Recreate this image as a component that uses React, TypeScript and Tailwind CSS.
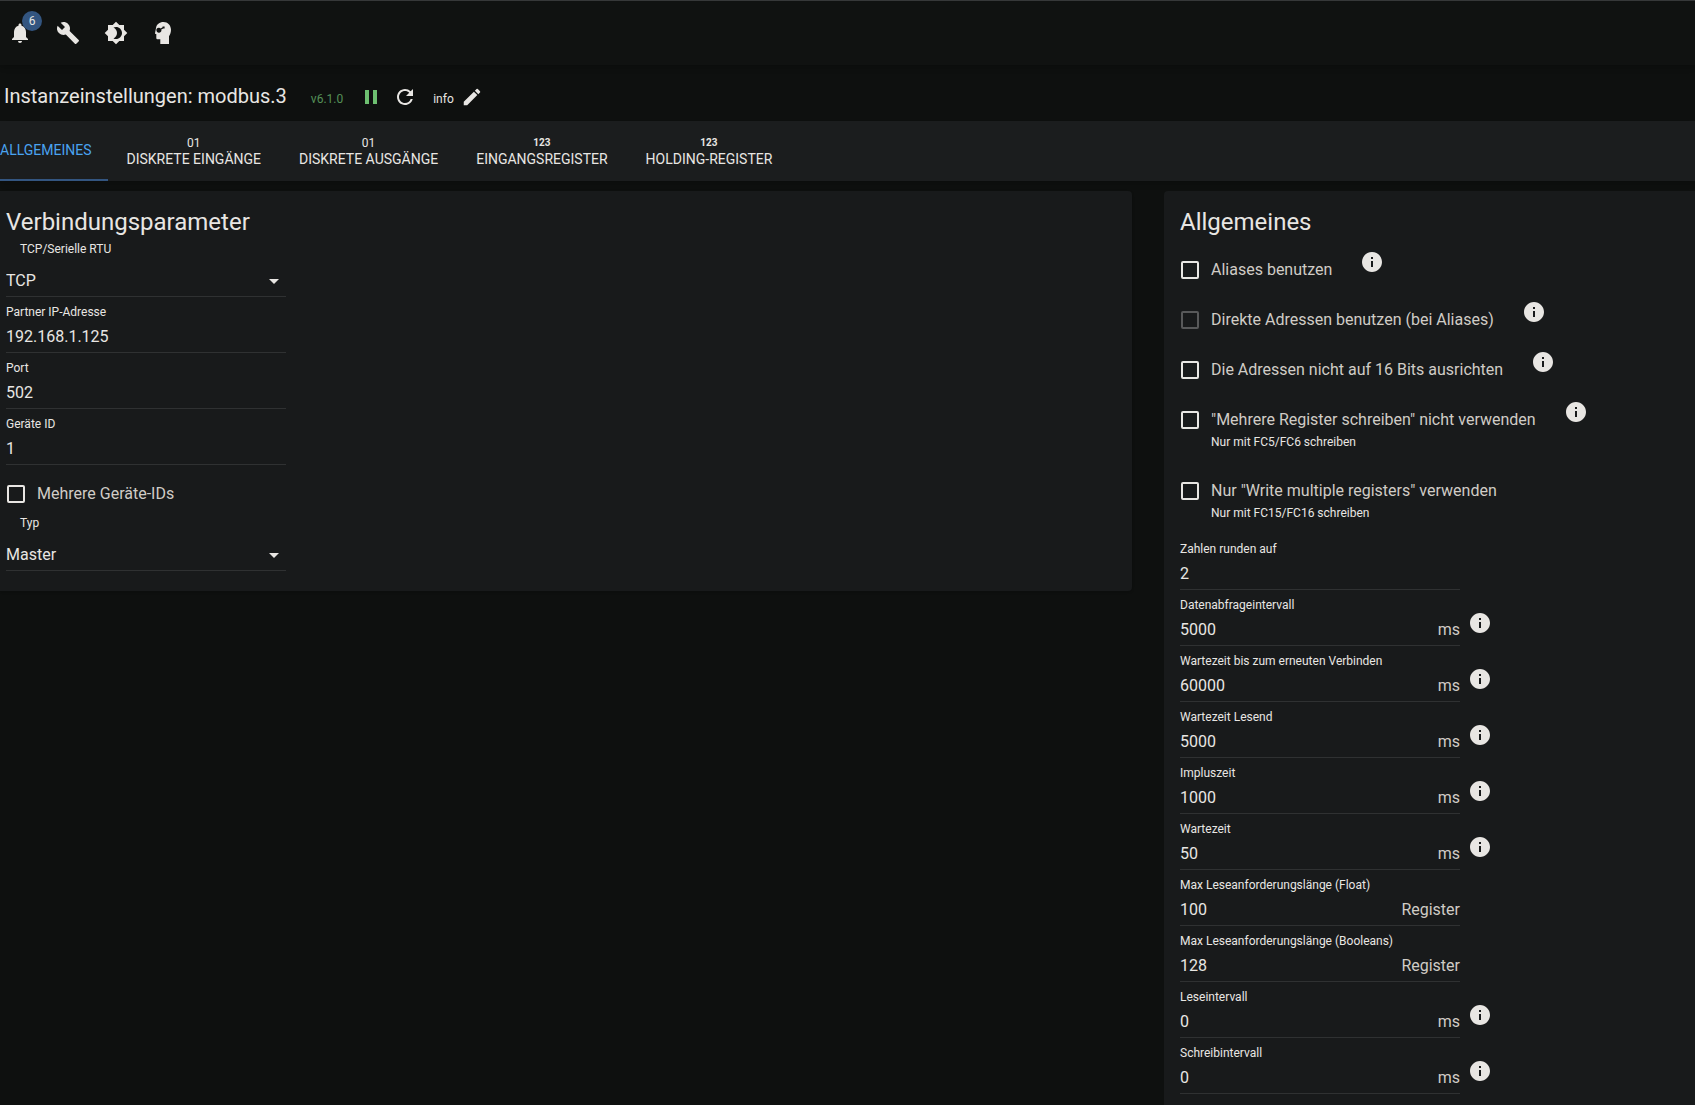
import { useState } from "react";
import { MdArrowDropDown, MdBrightness4, MdBuild, MdEdit, MdInfo, MdNotifications, MdPause, MdRefresh } from "react-icons/md";

const tabs = [
  { label: "Allgemeines", icon: "", iconClass: "" },
  { label: "Diskrete Eingänge", icon: "01", iconClass: "text-xs" },
  { label: "Diskrete Ausgänge", icon: "01", iconClass: "text-xs" },
  { label: "Eingangsregister", icon: "123", iconClass: "text-[10px] font-bold" },
  { label: "Holding-Register", icon: "123", iconClass: "text-[10px] font-bold" },
];

const connectionFields = [
  { id: "ip", label: "Partner IP-Adresse", value: "192.168.1.125" },
  { id: "port", label: "Port", value: "502" },
  { id: "device-id", label: "Geräte ID", value: "1" },
];

const options = [
  { id: "aliases", label: "Aliases benutzen", info: true },
  { id: "direct", label: "Direkte Adressen benutzen (bei Aliases)", info: true, disabled: true },
  { id: "align", label: "Die Adressen nicht auf 16 Bits ausrichten", info: true },
  { id: "no-multi", label: '"Mehrere Register schreiben" nicht verwenden', info: true, helper: "Nur mit FC5/FC6 schreiben" },
  { id: "only-multi", label: 'Nur "Write multiple registers" verwenden', helper: "Nur mit FC15/FC16 schreiben" },
];

const generalFields = [
  { id: "round", label: "Zahlen runden auf", value: "2" },
  { id: "poll", label: "Datenabfrageintervall", value: "5000", unit: "ms", info: true },
  { id: "reconnect", label: "Wartezeit bis zum erneuten Verbinden", value: "60000", unit: "ms", info: true },
  { id: "read-timeout", label: "Wartezeit Lesend", value: "5000", unit: "ms", info: true },
  { id: "pulse", label: "Impluszeit", value: "1000", unit: "ms", info: true },
  { id: "wait", label: "Wartezeit", value: "50", unit: "ms", info: true },
  { id: "max-float", label: "Max Leseanforderungslänge (Float)", value: "100", unit: "Register" },
  { id: "max-bool", label: "Max Leseanforderungslänge (Booleans)", value: "128", unit: "Register" },
  { id: "read-interval", label: "Leseintervall", value: "0", unit: "ms", info: true },
  { id: "write-interval", label: "Schreibintervall", value: "0", unit: "ms", info: true },
];

const ExpertIcon = () => (
  <svg viewBox="0 0 24 24" className="size-6" fill="currentColor">
    <path
      fillRule="evenodd"
      d="M11.500 1C7.400 1 4.500 3.400 4 7L3 12.200c0 .4.200.7.600.7h.700v4c0 .8.600 1.300 1.400 1.300H8.300V23H17v-7.800c1.300-1.700 2-3.900 2-6.400C19 4.200 15.700 1 11.500 1ZM7 6.700c.7 0 1.300.3 1.700.7L10.600 6.300V5.400h2v2h-1.300L9.300 8.600A2.500 2.500 0 1 1 7 6.700Z"
    />
  </svg>
);

const InfoButton = ({ label, className }: { label: string; className: string }) => (
  <button type="button" aria-label={`Info: ${label}`} className={`flex-shrink-0 self-start ${className}`}>
    <MdInfo className="size-6" />
  </button>
);

type FieldProps = { id: string; label: string; value: string; unit?: string; info?: boolean };

const TextField = ({ id, label, value, unit, info }: FieldProps) => (
  <div className="flex">
    <div className="w-[280px] pt-[7px]">
      <label htmlFor={id} className="block text-xs">{label}</label>
      <div className="flex h-[33px] items-center border-b border-[#2f3132] pt-0.5">
        <input id={id} defaultValue={value} className="min-w-0 flex-1 bg-transparent outline-none" />
        {unit && <span className="text-[#d0ccc6]">{unit}</span>}
      </div>
    </div>
    {info && <InfoButton label={label} className="mt-[21px] ml-2" />}
  </div>
);

const SelectField = ({ id, label, choices }: { id: string; label: string; choices: string[] }) => (
  <div className="w-[280px]">
    <label htmlFor={id} className="block pl-3.5 text-xs">{label}</label>
    <div className="relative mt-[7px]">
      <select id={id} className="h-[33px] w-full appearance-none border-b border-[#2f3132] bg-transparent pt-0.5 outline-none">
        {choices.map((choice) => (
          <option key={choice}>{choice}</option>
        ))}
      </select>
      <MdArrowDropDown className="pointer-events-none absolute top-[5px] right-0 size-6" />
    </div>
  </div>
);

type OptionProps = { id: string; label: string; helper?: string; info?: boolean; disabled?: boolean };

const CheckField = ({ id, label, helper, info, disabled }: OptionProps) => (
  <div className="flex">
    <div className="flex gap-3 pt-[17px] pl-px">
      <input
        id={id}
        type="checkbox"
        disabled={disabled}
        className="mt-[3px] size-[18px] flex-shrink-0 appearance-none rounded-xs border-2 border-[#e8e6e3] checked:bg-[#4aa3f0] disabled:border-[#58595a]"
      />
      <div className={helper ? "pb-3" : "pb-[9px]"}>
        <label htmlFor={id} className="block text-[#d0ccc6]">{label}</label>
        {helper && <p className="mt-0.5 text-xs">{helper}</p>}
      </div>
    </div>
    {info && <InfoButton label={label} className="mt-[9px] ml-7" />}
  </div>
);

const App = () => {
  const [active, setActive] = useState("Allgemeines");

  return (
    <div className="flex min-h-screen flex-col overflow-hidden bg-[#0e100f] font-[Roboto,sans-serif] text-base text-[#e8e6e3]">
      {/* Toolbar */}
      <header className="flex h-[65px] items-center gap-6 border-t border-[#363839] bg-[#101211] pl-2 shadow-md">
        <button type="button" aria-label="Benachrichtigungen" className="relative">
          <MdNotifications className="size-6" />
          <span className="absolute -top-2.5 left-3.5 flex size-5 items-center justify-center rounded-full bg-[#335580] text-xs">6</span>
        </button>
        <button type="button" aria-label="Werkzeuge"><MdBuild className="size-6" /></button>
        <button type="button" aria-label="Farbschema"><MdBrightness4 className="size-6" /></button>
        <button type="button" aria-label="Expertenmodus"><ExpertIcon /></button>
      </header>

      {/* Title */}
      <div className="flex h-14 items-center pt-2 pl-1">
        <h1 className="pb-0.5 text-xl">Instanzeinstellungen: modbus.3</h1>
        <span className="pt-1 pl-6 text-xs text-[#559058]">v6.1.0</span>
        <button type="button" aria-label="Anhalten" className="ml-4 text-[#6dbf70]"><MdPause className="size-6" /></button>
        <button type="button" aria-label="Neu starten" className="ml-2.5"><MdRefresh className="size-6" /></button>
        <span className="pt-1 pl-4 text-xs">info</span>
        <button type="button" aria-label="Bearbeiten" className="ml-[7px]"><MdEdit className="size-[22px]" /></button>
      </div>

      {/* Tabs */}
      <nav role="tablist" className="flex h-[60px] bg-[#1b1d1e] text-sm shadow-md">
        {tabs.map((tab) => (
          <button
            key={tab.label}
            type="button"
            role="tab"
            aria-selected={active === tab.label}
            onClick={() => setActive(tab.label)}
            className={`flex flex-col items-center justify-center border-b-2 px-[19px] uppercase first:pr-4 first:pl-0 ${
              active === tab.label ? "border-[#335580] text-[#4aa3f0]" : "border-transparent"
            }`}
          >
            {tab.icon && <span className={`mt-1 h-3.5 leading-[14px] ${tab.iconClass}`}>{tab.icon}</span>}
            <span className="leading-[18px]">{tab.label}</span>
          </button>
        ))}
      </nav>

      <main className="flex flex-1 items-start gap-8 pt-2.5">
        <section className="flex-1 rounded-r bg-[#181a1b] pt-[15px] pb-5 pl-1.5 shadow-sm">
          <h2 className="mb-[3px] text-2xl">Verbindungsparameter</h2>
          <SelectField id="transport" label="TCP/Serielle RTU" choices={["TCP", "Serielle RTU"]} />
          {connectionFields.map((field) => (
            <TextField key={field.id} {...field} />
          ))}
          <CheckField id="multi-ids" label="Mehrere Geräte-IDs" />
          <SelectField id="type" label="Typ" choices={["Master", "Slave"]} />
        </section>

        <section className="w-[531px] self-stretch rounded-tl bg-[#181a1b] pt-[15px] pl-4">
          <h2 className="mb-[3px] text-2xl">Allgemeines</h2>
          {options.map((option) => (
            <CheckField key={option.id} {...option} />
          ))}
          <div className="pt-px">
            {generalFields.map((field) => (
              <TextField key={field.id} {...field} />
            ))}
          </div>
        </section>
      </main>
    </div>
  );
};

export default App;
